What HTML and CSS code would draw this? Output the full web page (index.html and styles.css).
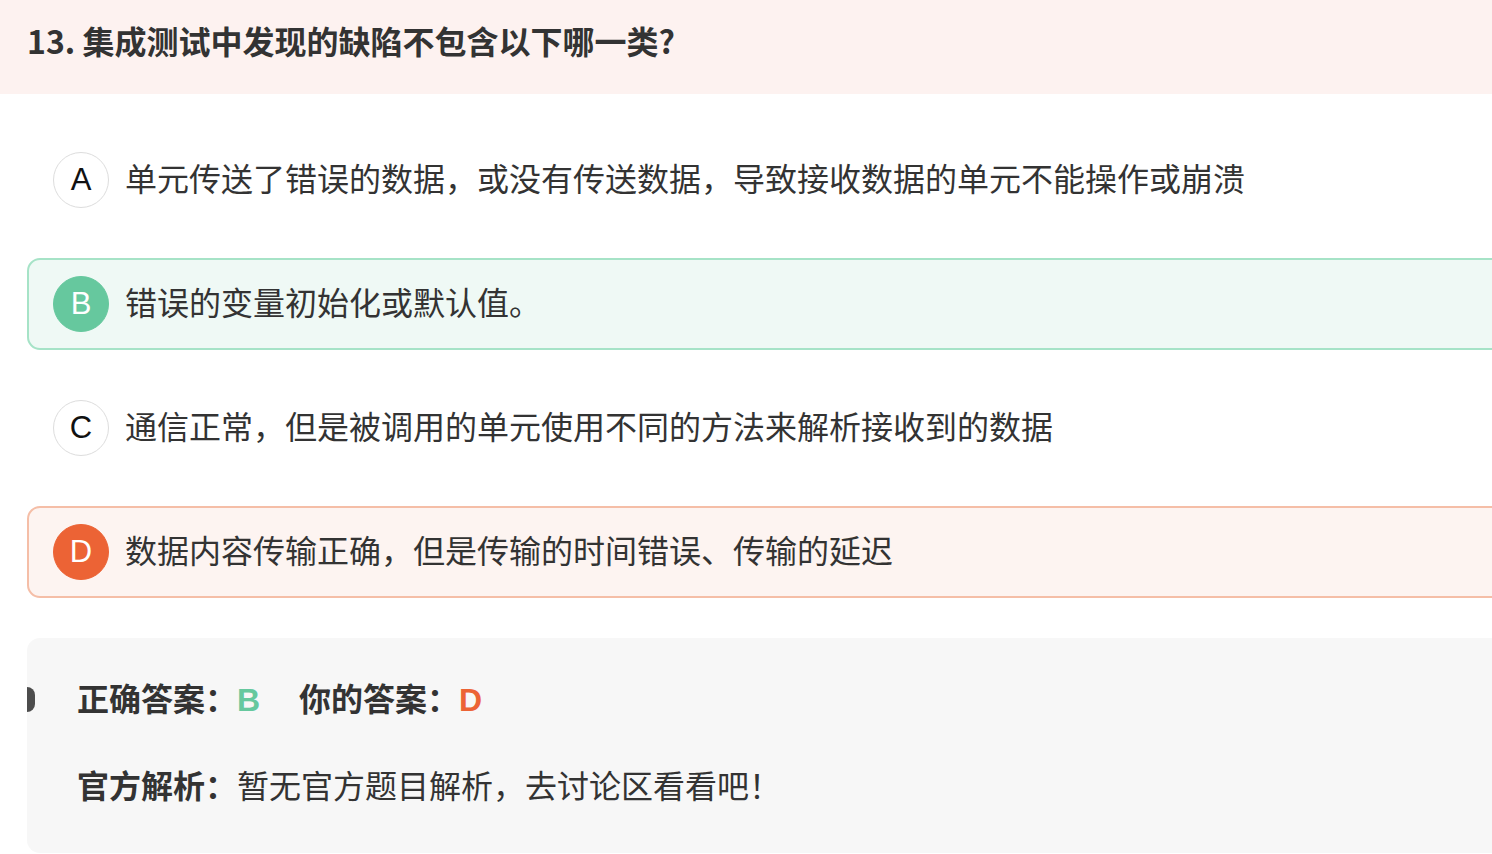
FILE: index.html
```html
<!DOCTYPE html>
<html lang="zh-CN">
<head>
<meta charset="utf-8">
<title>集成测试</title>
<link rel="stylesheet" href="styles.css">
</head>
<body>
<div class="page">
  <div class="q-head">
    <h1 class="q-title">13. 集成测试中发现的缺陷不包含以下哪一类?</h1>
  </div>
  <ul class="options">
    <li class="option">
      <span class="badge">A</span>
      <span class="opt-text">单元传送了错误的数据，或没有传送数据，导致接收数据的单元不能操作或崩溃</span>
    </li>
    <li class="option option-right">
      <span class="badge">B</span>
      <span class="opt-text">错误的变量初始化或默认值。</span>
    </li>
    <li class="option">
      <span class="badge">C</span>
      <span class="opt-text">通信正常，但是被调用的单元使用不同的方法来解析接收到的数据</span>
    </li>
    <li class="option option-wrong">
      <span class="badge">D</span>
      <span class="opt-text">数据内容传输正确，但是传输的时间错误、传输的延迟</span>
    </li>
  </ul>
  <div class="answer">
    <span class="marker"></span>
    <div class="answer-line">
      <span class="label">正确答案：</span><span class="ans ans-right">B</span>
      <span class="label label-gap">你的答案：</span><span class="ans ans-wrong">D</span>
    </div>
    <div class="answer-line analysis">
      <span class="label">官方解析：</span><span class="analysis-text">暂无官方题目解析，去讨论区看看吧！</span>
    </div>
  </div>
</div>
</body>
</html>
```

FILE: styles.css
```css
html, body {
  margin: 0;
  padding: 0;
  background: #ffffff;
  overflow: hidden;
}

body {
  font-family: "Liberation Sans", "Noto Sans CJK SC", sans-serif;
  color: #333333;
}

.page {
  width: 100%;
  overflow: hidden;
}

.q-head {
  background: #fdf2f0;
  padding: 20px 27px 34px;
}

.q-title {
  margin: 0;
  font-family: "Noto Sans CJK SC", sans-serif;
  font-size: 32px;
  line-height: 40px;
  font-weight: 700;
  color: #333333;
}

.options {
  list-style: none;
  margin: 40px -60px 0 0;
  padding: 0 0 0 27px;
  display: flex;
  flex-direction: column;
  gap: 32px;
}

.option {
  box-sizing: border-box;
  height: 92px;
  border: 2px solid transparent;
  border-radius: 13px;
  padding: 0 24px;
  display: flex;
  align-items: center;
  gap: 16px;
}

.badge {
  box-sizing: border-box;
  width: 56px;
  height: 56px;
  flex: none;
  border-radius: 50%;
  border: 1.5px solid #dddddd;
  display: flex;
  align-items: center;
  justify-content: center;
  font-size: 31px;
  color: #111111;
  background: #ffffff;
}

.opt-text {
  font-size: 32px;
  line-height: 44px;
  color: #333333;
  white-space: nowrap;
}

.option-right {
  border-color: #a6e3c7;
  background: #eff9f5;
}

.option-right .badge {
  background: #66c89e;
  border-color: #66c89e;
  color: #ffffff;
}

.option-wrong {
  border-color: #f5bea7;
  background: #fdf4f1;
}

.option-wrong .badge {
  background: #ec6335;
  border-color: #ec6335;
  color: #ffffff;
}

.answer {
  position: relative;
  margin: 40px -60px 0 27px;
  background: #f7f7f7;
  border-radius: 13px;
  padding: 40px 50px 44px;
}

.marker {
  position: absolute;
  left: 0;
  top: 49px;
  width: 8px;
  height: 25px;
  border-radius: 0 13px 13px 0;
  background: #4d4d4d;
}

.answer-line {
  font-size: 32px;
  line-height: 44px;
  white-space: nowrap;
}

.analysis {
  margin-top: 43px;
}

.label {
  font-weight: 700;
  color: #333333;
}

.label-gap {
  margin-left: 30px;
}

.ans {
  font-weight: 700;
}

.ans-right {
  color: #66c89e;
}

.ans-wrong {
  color: #ec6335;
}

.analysis-text {
  font-weight: 400;
  color: #333333;
}
```
